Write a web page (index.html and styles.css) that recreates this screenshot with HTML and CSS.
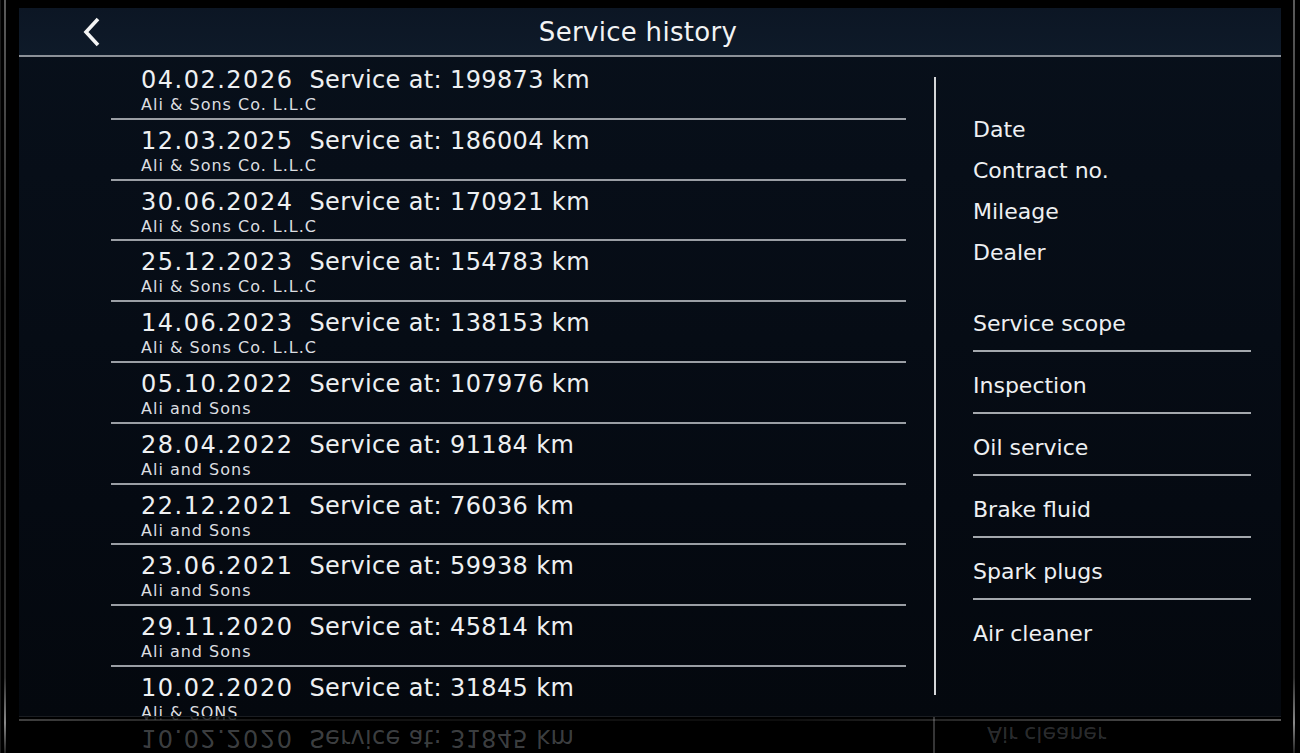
FILE: index.html
```html
<!DOCTYPE html>
<html lang="en">
<head>
<meta charset="utf-8">
<title>Service history</title>
<link rel="stylesheet" href="styles.css">
</head>
<body>
<div class="device">
  <div class="screen">
    <header class="topbar">
      <div class="topbar-left">
        <button class="back" aria-label="Back">
          <svg width="18" height="30" viewBox="0 0 18 30"><polyline points="15,2 3,15 15,28" fill="none" stroke="#f4f4f4" stroke-width="3.6" stroke-linecap="butt" stroke-linejoin="miter"/></svg>
        </button>
      </div>
      <h1 class="title">Service history</h1>
      <div></div>
    </header>

    <div class="content">
      <ul class="history">
        <li class="entry"><div class="entry-main"><span class="date">04.02.2026</span><span class="km">Service at: 199873 km</span></div><div class="dealer">Ali &amp; Sons Co. L.L.C</div></li>
        <li class="entry"><div class="entry-main"><span class="date">12.03.2025</span><span class="km">Service at: 186004 km</span></div><div class="dealer">Ali &amp; Sons Co. L.L.C</div></li>
        <li class="entry"><div class="entry-main"><span class="date">30.06.2024</span><span class="km">Service at: 170921 km</span></div><div class="dealer">Ali &amp; Sons Co. L.L.C</div></li>
        <li class="entry"><div class="entry-main"><span class="date">25.12.2023</span><span class="km">Service at: 154783 km</span></div><div class="dealer">Ali &amp; Sons Co. L.L.C</div></li>
        <li class="entry"><div class="entry-main"><span class="date">14.06.2023</span><span class="km">Service at: 138153 km</span></div><div class="dealer">Ali &amp; Sons Co. L.L.C</div></li>
        <li class="entry"><div class="entry-main"><span class="date">05.10.2022</span><span class="km">Service at: 107976 km</span></div><div class="dealer">Ali and Sons</div></li>
        <li class="entry"><div class="entry-main"><span class="date">28.04.2022</span><span class="km">Service at: 91184 km</span></div><div class="dealer">Ali and Sons</div></li>
        <li class="entry"><div class="entry-main"><span class="date">22.12.2021</span><span class="km">Service at: 76036 km</span></div><div class="dealer">Ali and Sons</div></li>
        <li class="entry"><div class="entry-main"><span class="date">23.06.2021</span><span class="km">Service at: 59938 km</span></div><div class="dealer">Ali and Sons</div></li>
        <li class="entry"><div class="entry-main"><span class="date">29.11.2020</span><span class="km">Service at: 45814 km</span></div><div class="dealer">Ali and Sons</div></li>
        <li class="entry"><div class="entry-main"><span class="date">10.02.2020</span><span class="km">Service at: 31845 km</span></div><div class="dealer">Ali &amp; SONS</div></li>
      </ul>

      <div class="divider-v"></div>

      <aside class="details">
        <ul class="fields">
          <li>Date</li>
          <li>Contract no.</li>
          <li>Mileage</li>
          <li>Dealer</li>
        </ul>
        <ul class="scope">
          <li>Service scope</li>
          <li>Inspection</li>
          <li>Oil service</li>
          <li>Brake fluid</li>
          <li>Spark plugs</li>
          <li>Air cleaner</li>
        </ul>
      </aside>
    </div>
  </div>

  <!-- glass reflection of the lower screen edge -->
  <div class="reflection" aria-hidden="true">
    <div class="reflection-inner">
      <div class="reflect-row">
        <div class="entry-main"><span class="date">10.02.2020</span><span class="km">Service at: 31845 km</span></div>
        <div class="dealer">Ali &amp; SONS</div>
      </div>
      <div class="reflect-line"></div>
      <div class="reflect-side">Air cleaner</div>
    </div>
  </div>
</div>
</body>
</html>
```

FILE: styles.css
```css
* {
  box-sizing: border-box;
}

html, body {
  margin: 0;
  padding: 0;
  background: #000;
  overflow: hidden;
}

body {
  font-family: "DejaVu Sans", "Liberation Sans", sans-serif;
  color: #eef0f2;
}

ul {
  list-style: none;
  margin: 0;
  padding: 0;
}

.device {
  position: relative;
  width: 1300px;
  height: 753px;
  padding: 8px 20px 0 18px;
  background: #000;
  border-left: 1px solid #1c1c1c;
}

/* thin glass edges of the bezel */
.device::before,
.device::after {
  content: "";
  position: absolute;
  top: 0;
  bottom: 0;
  width: 2px;
  background: linear-gradient(#5a5a5a, #262626 40%, #2e2e2e 90%, #888 96%, #222);
}

.device::before {
  left: 3px;
}

.device::after {
  right: 5px;
}

.screen {
  width: 1262px;
  height: 708px;
  overflow: hidden;
  background: linear-gradient(#08101b, #050a12 70%, #04080e);
}

/* title bar */
.topbar {
  display: grid;
  grid-template-columns: 1fr auto 1fr;
  align-items: center;
  height: 49px;
  padding-right: 24px;
  background: linear-gradient(#0c1624, #0e1a29);
  border-bottom: 2px solid #8c9198;
}

.topbar-left {
  display: flex;
  align-items: center;
}

.back {
  display: flex;
  margin: 0 0 0 64px;
  padding: 0;
  border: 0;
  background: none;
}

.title {
  margin: 0;
  font-size: 26px;
  font-weight: normal;
  letter-spacing: 0.3px;
  color: #f2f3f4;
}

/* body */
.content {
  display: flex;
  align-items: flex-start;
}

.history {
  width: 795px;
  margin: 2px 0 0 92px;
}

.entry {
  height: 60.8px;
  padding-top: 8px;
  border-bottom: 2px solid #9a9ea4;
}

.entry-main {
  display: flex;
  height: 26px;
  line-height: 26px;
  font-size: 24px;
  padding-left: 30px;
}

.date {
  letter-spacing: 1.5px;
}

.km {
  margin-left: 16px;
  letter-spacing: 0.37px;
}

.dealer {
  margin-top: 3px;
  padding-left: 30px;
  font-size: 16px;
  line-height: 18px;
  letter-spacing: 1px;
  color: #dcdee0;
}

.divider-v {
  width: 2px;
  height: 618px;
  margin: 20px 0 0 28px;
  background: #d4d6d8;
}

.details {
  width: 278px;
  margin-left: 37px;
  padding-top: 52px;
  font-size: 22px;
}

.fields li {
  line-height: 41px;
}

.scope {
  margin-top: 17px;
}

.scope li {
  padding: 14px 0 6px;
  line-height: 40px;
  border-bottom: 2px solid #a4a8ad;
}

.scope li:last-child {
  border-bottom: 0;
}

/* reflection on the glass below the screen */
.reflection {
  position: relative;
  width: 1262px;
  height: 37px;
  overflow: hidden;
  background: #000;
  border-top: 1px solid #1a1d22;
}

.reflection::before {
  content: "";
  position: absolute;
  left: 0;
  right: 0;
  top: 2px;
  height: 2px;
  background: linear-gradient(90deg, rgba(255,255,255,0.25), rgba(255,255,255,0.08) 20%, rgba(255,255,255,0.05) 60%, rgba(255,255,255,0.35));
}

.reflection-inner {
  display: flex;
  align-items: flex-start;
  height: 37px;
  transform: scaleY(-1);
  color: rgba(190, 196, 204, 0.32);
}

.reflect-row {
  width: 795px;
  margin-left: 92px;
  padding-top: 3px;
}

.reflect-row .dealer {
  color: rgba(190, 196, 204, 0.22);
}

.reflect-line {
  width: 2px;
  height: 37px;
  margin-left: 27px;
  background: rgba(210, 212, 216, 0.25);
}

.reflect-side {
  margin: 8px 0 0 52px;
  font-size: 22px;
  line-height: 24px;
  color: rgba(190, 196, 204, 0.24);
}
```
